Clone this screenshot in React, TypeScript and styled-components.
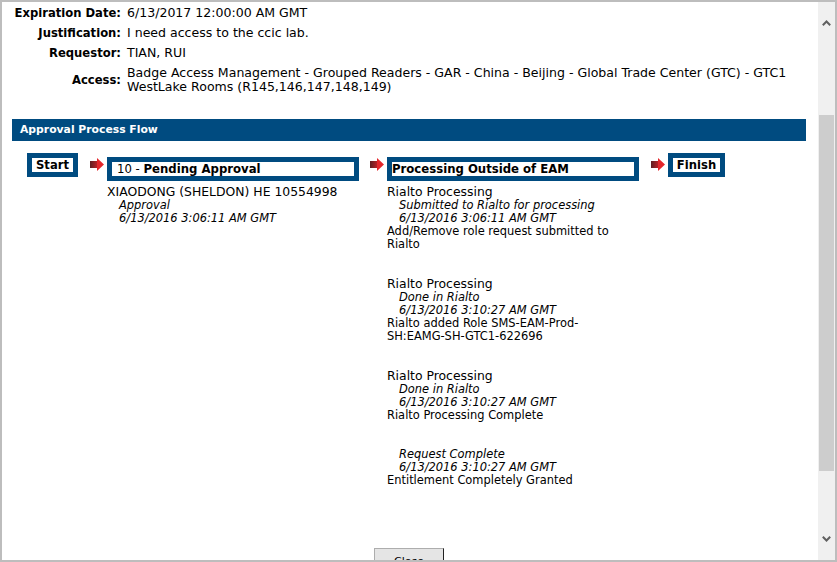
import React from 'react';
import styled, { createGlobalStyle } from 'styled-components';

const NAVY = '#004b80';

const Global = createGlobalStyle`
  html, body { margin: 0; padding: 0; background: #fff; }
  body { font-family: "DejaVu Sans", Verdana, sans-serif; color: #000; }
  * { box-sizing: border-box; }
`;

const Frame = styled.div`
  width: 837px;
  height: 562px;
  border: 2px solid #bdbdbd;
  display: flex;
  background: #fff;
  overflow: hidden;
`;

const Content = styled.div`
  flex: 1;
  min-width: 0;
  overflow: hidden;
  padding: 1px 12px 0 10px;
`;

const InfoGrid = styled.div`
  display: grid;
  grid-template-columns: 109px 1fr;
  column-gap: 6px;
`;

const InfoLabel = styled.div`
  font-weight: bold;
  font-size: 11.6px;
  line-height: 14px;
  padding: 3px 0;
  text-align: right;
  align-self: center;
  white-space: nowrap;
`;

const InfoValue = styled.div`
  font-size: 12.55px;
  line-height: 14px;
  padding: 3px 0;
  white-space: nowrap;
`;

const SectionBar = styled.div`
  margin-top: 22px;
  height: 22px;
  background: ${NAVY};
  color: #fff;
  font-weight: bold;
  font-size: 10.8px;
  line-height: 22px;
  padding-left: 8px;
`;

const FlowRow = styled.div`
  display: flex;
  align-items: flex-start;
  gap: 12px;
  margin-top: 12px;
  padding-left: 15px;
`;

const Stage = styled.div<{ $after?: number }>`
  display: flex;
  align-items: flex-start;
  gap: 3px;
  margin-right: ${(p) => p.$after ?? 0}px;
`;

const ArrowWrap = styled.div`
  margin-top: 5px;
  width: 14px;
  height: 13px;
  flex: none;
  display: flex;
`;

const TerminalBox = styled.div<{ $width: number }>`
  width: ${(p) => p.$width}px;
  border: 5px solid ${NAVY};
  font-weight: bold;
  font-size: 11.6px;
  line-height: 14px;
  text-align: center;
  white-space: nowrap;
`;

const StepColumn = styled.div`
  width: 252px;
  margin-top: 4px;
  display: flex;
  flex-direction: column;
`;

const StepBox = styled.div<{ $pad: number }>`
  border: 5px solid ${NAVY};
  font-size: 11.7px;
  line-height: 14px;
  padding: 0 ${(p) => p.$pad}px;
  white-space: nowrap;
  b { font-weight: bold; }
`;

const Entries = styled.div`
  margin-top: 4px;
  display: flex;
  flex-direction: column;
  gap: 26px;
`;

const Entry = styled.div`
  display: flex;
  flex-direction: column;
`;

const EntryTitle = styled.div`
  font-size: 12.4px;
  line-height: 14px;
  white-space: nowrap;
`;

const EntryNote = styled.div`
  font-size: 11.45px;
  line-height: 13px;
  font-style: italic;
  padding-left: 12px;
  white-space: nowrap;
`;

const EntryText = styled.div`
  font-size: 11.45px;
  line-height: 13px;
  white-space: nowrap;
`;

const Footer = styled.div`
  display: flex;
  justify-content: center;
  margin-top: 61px;
`;

const CloseButton = styled.button`
  width: 70px;
  height: 24px;
  padding: 3px 0 0;
  background: #e5e5e5;
  border: 1px solid #adadad;
  border-right: 1px solid #222;
  font-family: "DejaVu Sans", Verdana, sans-serif;
  font-size: 11px;
  line-height: 13px;
  color: #000;
  align-self: flex-start;
`;

const Scrollbar = styled.div`
  width: 17px;
  flex: none;
  background: #f0f0f0;
  display: flex;
  flex-direction: column;
`;

const ScrollButton = styled.div`
  height: 42px;
  flex: none;
  display: flex;
  align-items: center;
  justify-content: center;
`;

const Track = styled.div`
  flex: 1;
  padding: 71px 1px 0;
`;

const Thumb = styled.div`
  height: 356px;
  background: #cdcdcd;
`;

const FlowArrow = () => (
  <ArrowWrap>
    <svg width="14" height="13" viewBox="0 0 14 13">
      <defs>
        <linearGradient id="ab" x1="0" x2="1" y1="0" y2="0">
          <stop offset="0" stopColor="#5e1f22" />
          <stop offset="1" stopColor="#b82227" />
        </linearGradient>
      </defs>
      <rect x="0" y="3" width="7.5" height="7" fill="url(#ab)" />
      <polygon points="7,0 14,6.5 7,13" fill="#e3262b" />
    </svg>
  </ArrowWrap>
);

const Chevron = ({ up }: { up: boolean }) => (
  <svg width="9" height="6" viewBox="0 0 9 6">
    <polyline
      points={up ? '0.8,5.2 4.5,1.5 8.2,5.2' : '0.8,0.8 4.5,4.5 8.2,0.8'}
      fill="none"
      stroke="#606060"
      strokeWidth="2"
    />
  </svg>
);

type Item = { title?: string; note: string; date: string; text?: string[] };

const processing: Item[] = [
  {
    title: 'Rialto Processing',
    note: 'Submitted to Rialto for processing',
    date: '6/13/2016 3:06:11 AM GMT',
    text: ['Add/Remove role request submitted to', 'Rialto'],
  },
  {
    title: 'Rialto Processing',
    note: 'Done in Rialto',
    date: '6/13/2016 3:10:27 AM GMT',
    text: ['Rialto added Role SMS-EAM-Prod-', 'SH:EAMG-SH-GTC1-622696'],
  },
  {
    title: 'Rialto Processing',
    note: 'Done in Rialto',
    date: '6/13/2016 3:10:27 AM GMT',
    text: ['Rialto Processing Complete'],
  },
  {
    note: 'Request Complete',
    date: '6/13/2016 3:10:27 AM GMT',
    text: ['Entitlement Completely Granted'],
  },
];

const pending: Item[] = [
  {
    title: 'XIAODONG (SHELDON) HE 10554998',
    note: 'Approval',
    date: '6/13/2016 3:06:11 AM GMT',
  },
];

const EntryList = ({ items }: { items: Item[] }) => (
  <Entries>
    {items.map((it, i) => (
      <Entry key={i}>
        {it.title && <EntryTitle>{it.title}</EntryTitle>}
        <EntryNote>{it.note}</EntryNote>
        <EntryNote>{it.date}</EntryNote>
        {it.text?.map((t, j) => (
          <EntryText key={j}>{t}</EntryText>
        ))}
      </Entry>
    ))}
  </Entries>
);

export default function App() {
  return (
    <>
      <Global />
      <Frame>
        <Content>
          <InfoGrid>
            <InfoLabel>Expiration Date:</InfoLabel>
            <InfoValue>6/13/2017 12:00:00 AM GMT</InfoValue>
            <InfoLabel>Justification:</InfoLabel>
            <InfoValue>I need access to the ccic lab.</InfoValue>
            <InfoLabel>Requestor:</InfoLabel>
            <InfoValue>TIAN, RUI</InfoValue>
            <InfoLabel>Access:</InfoLabel>
            <InfoValue>
              Badge Access Management - Grouped Readers - GAR - China - Beijing - Global Trade Center (GTC) - GTC1
              <br />
              WestLake Rooms (R145,146,147,148,149)
            </InfoValue>
          </InfoGrid>

          <SectionBar>Approval Process Flow</SectionBar>

          <FlowRow>
            <TerminalBox $width={51}>Start</TerminalBox>
            <Stage $after={-1}>
              <FlowArrow />
              <StepColumn>
                <StepBox $pad={5}>
                  10 - <b>Pending Approval</b>
                </StepBox>
                <EntryList items={pending} />
              </StepColumn>
            </Stage>
            <Stage>
              <FlowArrow />
              <StepColumn>
                <StepBox $pad={0}>
                  <b>Processing Outside of EAM</b>
                </StepBox>
                <EntryList items={processing} />
              </StepColumn>
            </Stage>
            <Stage>
              <FlowArrow />
              <TerminalBox $width={57}>Finish</TerminalBox>
            </Stage>
          </FlowRow>

          <Footer>
            <CloseButton>Close</CloseButton>
          </Footer>
        </Content>
        <Scrollbar>
          <ScrollButton>
            <Chevron up />
          </ScrollButton>
          <Track>
            <Thumb />
          </Track>
          <ScrollButton>
            <Chevron up={false} />
          </ScrollButton>
        </Scrollbar>
      </Frame>
    </>
  );
}
